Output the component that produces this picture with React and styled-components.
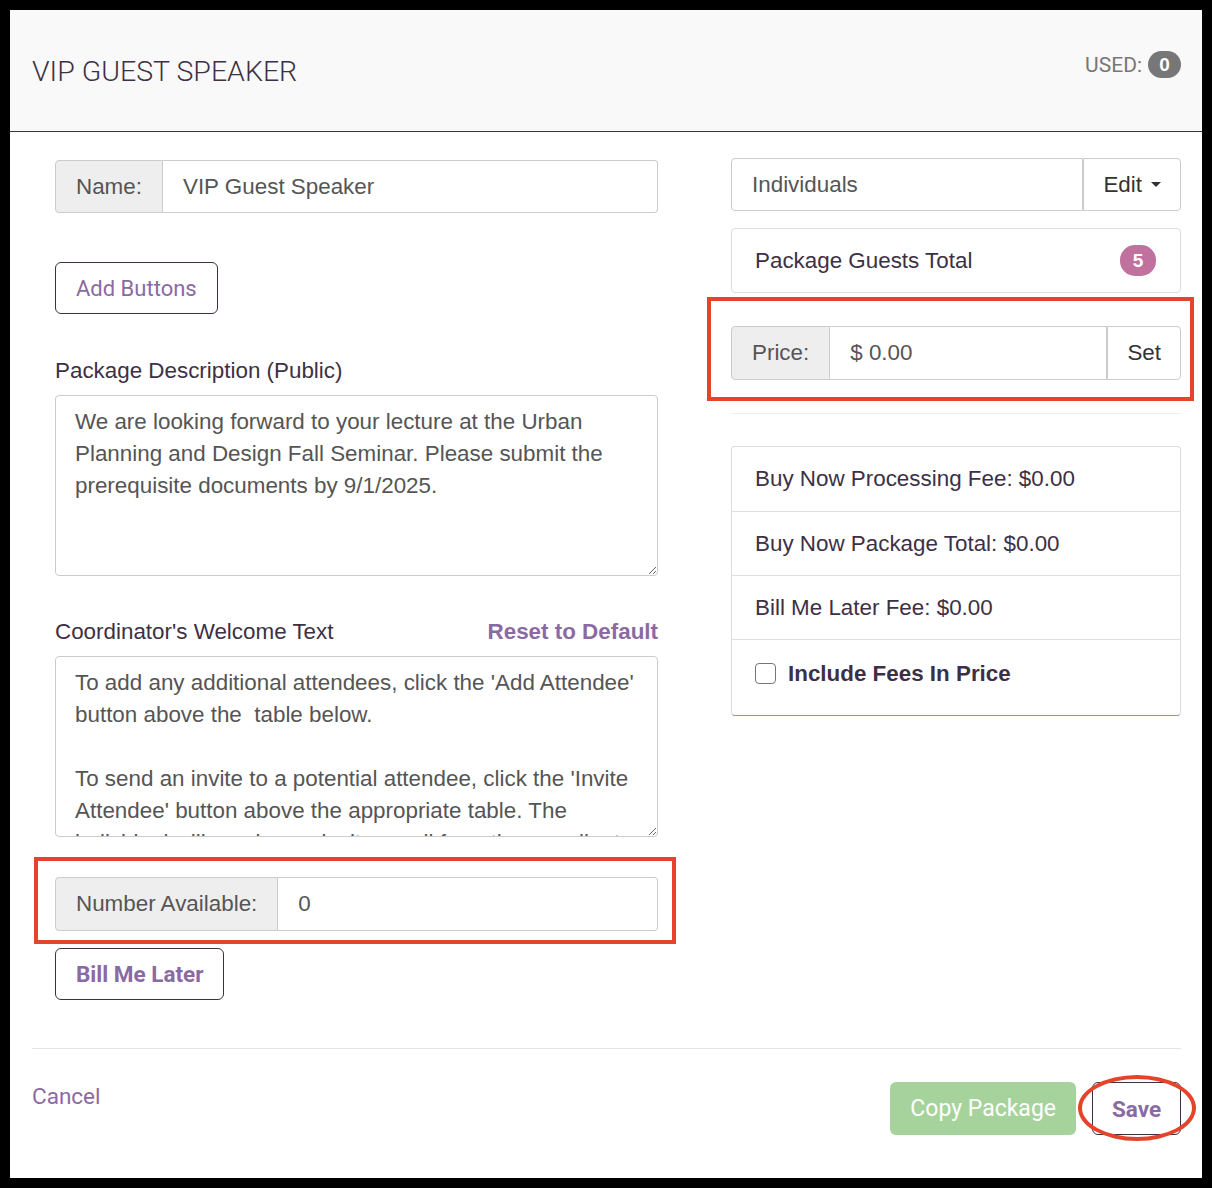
import React from 'react';
import styled, { createGlobalStyle } from 'styled-components';

const Global = createGlobalStyle`
  html, body { margin: 0; padding: 0; background: #000; }
  body { font-family: "Liberation Sans", Arial, sans-serif; }
  * { box-sizing: border-box; }
`;

const BODY_SIZE = '22.4px';

const Page = styled.div`
  width: 1212px;
  height: 1188px;
  padding: 10px;
  background: #000;
`;

const Modal = styled.div`
  width: 1192px;
  height: 1168px;
  background: #fff;
  display: flex;
  flex-direction: column;
`;

const Header = styled.header`
  height: 122px;
  flex: none;
  background: #f9f9f9;
  border-bottom: 1px solid #3d3045;
  display: flex;
  justify-content: space-between;
  align-items: flex-start;
  padding: 0 21px 0 22px;
`;

const Title = styled.h4`
  margin: 45px 0 0;
  font-family: Roboto, sans-serif;
  font-weight: 300;
  font-size: 28.5px;
  line-height: 34px;
  color: #3d3045;
`;

const Used = styled.div`
  margin-top: 41px;
  display: flex;
  align-items: center;
  gap: 6px;
  font-family: Roboto, sans-serif;
  font-size: 21px;
  color: #777;
  height: 27px;
`;

const Badge = styled.span`
  display: inline-flex;
  align-items: center;
  justify-content: center;
  min-width: ${p => p.$w || 33}px;
  height: ${p => p.$h || 27}px;
  padding: 0 10px;
  border-radius: 15px;
  background: ${p => p.$bg || '#777'};
  color: #fff;
  font-family: "Liberation Sans", Arial, sans-serif;
  font-weight: 700;
  font-size: 19px;
`;

const Body = styled.div`
  display: flex;
  justify-content: space-between;
  padding: 0 21px 0 45px;
`;

const Column = styled.div`
  width: ${p => p.$w}px;
  padding-top: ${p => p.$top}px;
  display: flex;
  flex-direction: column;
`;

const Spacer = styled.div`
  height: ${p => p.$h}px;
  flex: none;
`;

const InputGroup = styled.div`
  position: relative;
  display: flex;
  height: ${p => p.$h || 53}px;
  font-size: ${BODY_SIZE};
  color: #555;
`;

const Addon = styled.span`
  display: flex;
  align-items: center;
  padding: 0 20px;
  background: #eee;
  border: 1px solid #ccc;
  border-radius: 4px 0 0 4px;
  white-space: nowrap;
`;

const Field = styled.div`
  flex: 1;
  display: flex;
  align-items: center;
  padding: 0 20px;
  border: 1px solid #ccc;
  border-left: ${p => (p.$first ? '1px solid #ccc' : 'none')};
  border-radius: ${p => (p.$first ? '4px 0 0 4px' : p.$last ? '0' : '0 4px 4px 0')};
  background: #fff;
  color: #555;
`;

const SideButton = styled.span`
  display: flex;
  align-items: center;
  gap: 9px;
  padding: 0 19px;
  border: 1px solid #ccc;
  border-left: ${p => (p.$joined ? 'none' : '1px solid #ccc')};
  border-radius: 0 4px 4px 0;
  background: #fff;
  color: #333;
`;

const Caret = styled.span`
  width: 0;
  height: 0;
  border-top: 5px solid #333;
  border-left: 5px solid transparent;
  border-right: 5px solid transparent;
`;

const OutlineButton = styled.button`
  align-self: flex-start;
  height: 52px;
  padding: 0 20px;
  background: #fff;
  border: 1px solid #3d3045;
  border-radius: 6px;
  font-family: Roboto, sans-serif;
  font-size: ${p => (p.$bold ? '22.5px' : '22px')};
  font-weight: ${p => (p.$bold ? 700 : 400)};
  color: #8b6aa3;
  position: relative;
`;

const Label = styled.div`
  display: flex;
  justify-content: space-between;
  align-items: center;
  font-size: ${BODY_SIZE};
  line-height: 24px;
  color: #3d3045;
`;

const ResetLink = styled.span`
  font-weight: 700;
  font-size: ${BODY_SIZE};
  color: #8b6aa3;
`;

const TextArea = styled.textarea`
  display: block;
  width: 100%;
  height: 181px;
  margin-top: 12px;
  padding: 10px 12px 10px 19px;
  border: 1px solid #ccc;
  border-radius: 4px;
  font-family: "Liberation Sans", Arial, sans-serif;
  font-size: ${BODY_SIZE};
  line-height: 32px;
  color: #555;
  overflow: hidden;
  resize: vertical;
  background: #fff;
`;

const Card = styled.div`
  display: flex;
  justify-content: space-between;
  align-items: center;
  height: 65px;
  padding: 0 24px 0 23px;
  border: 1px solid #ddd;
  border-radius: 4px;
  font-size: ${BODY_SIZE};
  color: #3d3045;
`;

const Rule = styled.hr`
  margin: 0;
  border: 0;
  border-top: 1px solid #eee;
`;

const List = styled.div`
  border: 1px solid #ddd;
  border-bottom-color: #9f8ab1;
  border-radius: 4px;
  font-size: ${BODY_SIZE};
  color: #3d3045;
`;

const ListRow = styled.div`
  display: flex;
  align-items: ${p => (p.$tall ? 'flex-start' : 'center')};
  gap: 12px;
  height: ${p => (p.$tall ? 76 : 64)}px;
  padding: ${p => (p.$tall ? '23px' : '0')} 23px 0;
  border-top: ${p => (p.$first ? 'none' : '1px solid #ddd')};
`;

const Check = styled.input`
  appearance: none;
  width: 21px;
  height: 21px;
  margin: 0;
  border: 1.5px solid #767676;
  border-radius: 4px;
  background: #fff;
  flex: none;
`;

const CheckLabel = styled.span`
  font-weight: 700;
  line-height: 24px;
  margin-top: -1px;
`;

const Highlight = styled.span`
  position: absolute;
  pointer-events: none;
  top: ${p => p.$t}px;
  bottom: ${p => p.$b}px;
  left: ${p => p.$l}px;
  right: ${p => p.$r}px;
  border: 4px solid #e5432b;
  border-radius: ${p => (p.$round ? '50%' : '0')};
`;

const Footer = styled.footer`
  margin: 48px 21px 0 22px;
  padding-top: 33px;
  border-top: 1px solid #e5e5e5;
  display: flex;
  justify-content: space-between;
  align-items: flex-start;
`;

const CancelLink = styled.span`
  font-family: Roboto, sans-serif;
  font-size: 22.5px;
  line-height: 28px;
  color: #8b6aa3;
`;

const Actions = styled.div`
  display: flex;
  gap: 16px;
`;

const CopyButton = styled.button`
  height: 53px;
  padding: 0 20px;
  border: none;
  border-radius: 6px;
  background: #a6d39c;
  color: #fff;
  font-family: Roboto, sans-serif;
  font-size: 23px;
`;

const SaveButton = styled(OutlineButton)`
  height: 53px;
  width: 89px;
  padding: 0;
`;

const welcome =
  "To add any additional attendees, click the 'Add Attendee' button above the  table below.\n\nTo send an invite to a potential attendee, click the 'Invite Attendee' button above the appropriate table. The individual will receive an invite email from the coordinator.";

const description =
  'We are looking forward to your lecture at the Urban Planning and Design Fall Seminar. Please submit the prerequisite documents by 9/1/2025.';

export default function App() {
  return (
    <Page>
      <Global />
      <Modal>
        <Header>
          <Title>VIP GUEST SPEAKER</Title>
          <Used>
            USED: <Badge>0</Badge>
          </Used>
        </Header>
        <Body>
          <Column $w={603} $top={28}>
            <InputGroup>
              <Addon>Name:</Addon>
              <Field>VIP Guest Speaker</Field>
            </InputGroup>
            <Spacer $h={49} />
            <OutlineButton>Add Buttons</OutlineButton>
            <Spacer $h={45} />
            <Label>Package Description (Public)</Label>
            <TextArea defaultValue={description} />
            <Spacer $h={44} />
            <Label>
              Coordinator's Welcome Text
              <ResetLink>Reset to Default</ResetLink>
            </Label>
            <TextArea defaultValue={welcome} />
            <Spacer $h={40} />
            <InputGroup $h={54}>
              <Addon>Number Available:</Addon>
              <Field>0</Field>
              <Highlight $t={-20} $b={-13} $l={-21} $r={-18} />
            </InputGroup>
            <Spacer $h={17} />
            <OutlineButton $bold>Bill Me Later</OutlineButton>
          </Column>
          <Column $w={450} $top={26}>
            <InputGroup>
              <Field $first $last>Individuals</Field>
              <SideButton>
                Edit <Caret />
              </SideButton>
            </InputGroup>
            <Spacer $h={17} />
            <Card>
              Package Guests Total
              <Badge $bg="#c0719e" $w={36} $h={31}>5</Badge>
            </Card>
            <Spacer $h={33} />
            <InputGroup $h={54}>
              <Addon>Price:</Addon>
              <Field $last>$ 0.00</Field>
              <SideButton>Set</SideButton>
              <Highlight $t={-29} $b={-21} $l={-24} $r={-13} />
            </InputGroup>
            <Spacer $h={33} />
            <Rule />
            <Spacer $h={32} />
            <List>
              <ListRow $first>Buy Now Processing Fee: $0.00</ListRow>
              <ListRow>Buy Now Package Total: $0.00</ListRow>
              <ListRow>Bill Me Later Fee: $0.00</ListRow>
              <ListRow $tall>
                <Check type="checkbox" />
                <CheckLabel>Include Fees In Price</CheckLabel>
              </ListRow>
            </List>
          </Column>
        </Body>
        <Footer>
          <CancelLink>Cancel</CancelLink>
          <Actions>
            <CopyButton>Copy Package</CopyButton>
            <SaveButton $bold>
              Save
              <Highlight $round $t={-8} $b={-7} $l={-15} $r={-16} />
            </SaveButton>
          </Actions>
        </Footer>
      </Modal>
    </Page>
  );
}
